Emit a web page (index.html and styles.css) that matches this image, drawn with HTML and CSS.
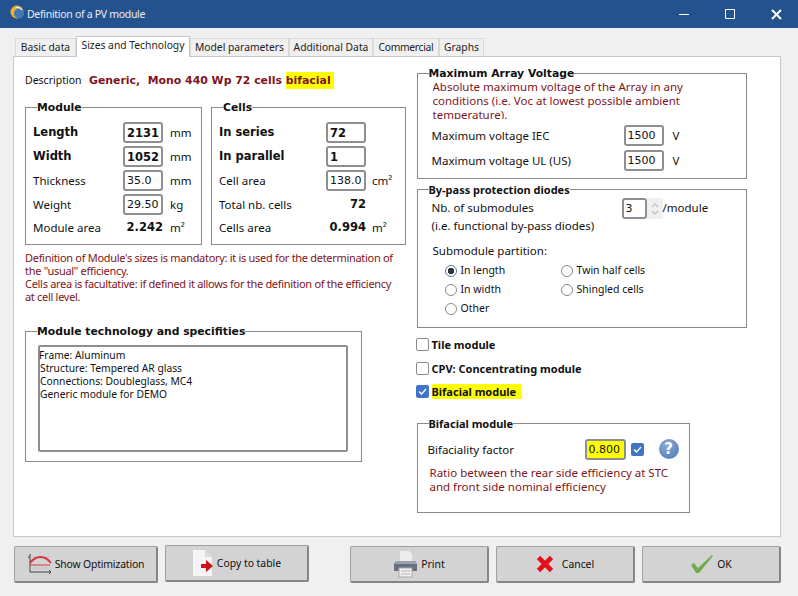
FILE: index.html
```html
<!DOCTYPE html>
<html lang="en">
<head>
  <meta charset="UTF-8" />
  <title>Definition of a PV module</title>
  <link rel="stylesheet" href="styles.css">
</head>
<body>
  <div class="titlebar">
    <svg class="app-icon" width="14" height="14" viewBox="0 0 14 14">
      <circle cx="7" cy="7" r="6.500" fill="#f0b02c" />
      <circle cx="9" cy="8.500" r="5" fill="#3f78b8" />
      <path d="M6 2.500a6 6 0 0 1 6 2.500" fill="none" stroke="#e8eef6" stroke-width="1.200" />
    </svg>
    <span class="title">Definition of a PV module</span>
    <svg class="win-btn min" width="10" height="10" viewBox="0 0 10 10"><path d="M0 5.500h10" stroke="#fff" /></svg>
    <svg class="win-btn max" width="10" height="10" viewBox="0 0 10 10"><path d="M.5.5h9v9h-9z" fill="none" stroke="#fff" /></svg>
    <svg class="win-btn close" width="11" height="11" viewBox="0 0 11 11"><path d="M1 1l9 9M10 1l-9 9" stroke="#fff" stroke-width="2" /></svg>
  </div>

  <div class="tabs">
    <span class="tab tab-basic">Basic data</span>
    <span class="tab tab-sizes active">Sizes and Technology</span>
    <span class="tab tab-model">Model parameters</span>
    <span class="tab tab-extra">Additional Data</span>
    <span class="tab tab-comm">Commercial</span>
    <span class="tab tab-graphs">Graphs</span>
  </div>

  <div class="panel">
    <div class="col-left">
      <div class="desc">
        <span class="desc-label">Description</span>
        <span class="desc-value">Generic,&nbsp; Mono 440 Wp 72 cells <mark class="desc-mark">bifacial&nbsp;</mark></span>
      </div>

      <div class="size-boxes">
        <fieldset class="group module-box">
          <legend>Module</legend>
          <div class="form-grid module-grid">
            <b>Length</b><input class="field strong" value="2131" readonly /><span>mm</span>
            <b>Width</b><input class="field strong" value="1052" readonly /><span>mm</span>
            <span>Thickness</span><input class="field" value="35.0" readonly /><span>mm</span>
            <span>Weight</span><input class="field" value="29.50" readonly /><span>kg</span>
            <span>Module area</span><b class="calc">2.242</b><span>m²</span>
          </div>
        </fieldset>
        <fieldset class="group cells-box">
          <legend>Cells</legend>
          <div class="form-grid cells-grid">
            <b>In series</b><input class="field strong" value="72" readonly /><span></span>
            <b>In parallel</b><input class="field strong" value="1" readonly /><span></span>
            <span>Cell area</span><input class="field" value="138.0" readonly /><span>cm²</span>
            <span>Total nb. cells</span><b class="calc">72</b><span></span>
            <span>Cells area</span><b class="calc">0.994</b><span>m²</span>
          </div>
        </fieldset>
      </div>

      <p class="note size-note">Definition of Module's sizes is mandatory: it is used for the determination of the "usual" efficiency.<br />Cells area is facultative: if defined it allows for the definition of the efficiency at cell level.</p>

      <fieldset class="group tech-box">
        <legend>Module technology and specifities</legend>
        <div class="memo">Frame: Aluminum<br />Structure: Tempered AR glass<br />Connections: Doubleglass, MC4<br />Generic module for DEMO</div>
      </fieldset>
    </div>

    <div class="col-right">
      <fieldset class="group voltage-box">
        <legend>Maximum Array Voltage</legend>
        <p class="note voltage-note">Absolute maximum voltage of the Array in any conditions (i.e. Voc at lowest possible ambient temperature).</p>
        <div class="volt-row"><span>Maximum voltage IEC</span><input class="field" value="1500" readonly /><span>V</span></div>
        <div class="volt-row"><span>Maximum voltage UL (US)</span><input class="field" value="1500" readonly /><span>V</span></div>
      </fieldset>

      <fieldset class="group diode-box">
        <legend class="thin">By-pass protection diodes</legend>
        <div class="sub-row">
          <span class="sub-label">Nb. of submodules<br />(i.e. functional by-pass diodes)</span>
          <input class="field sub-field" value="3" readonly />
          <span class="spin">
            <svg width="10" height="6" viewBox="0 0 10 6"><path d="M2 5l3-3 3 3" fill="none" stroke="#c4c4c4" stroke-width="1.400" /></svg>
            <svg width="10" height="6" viewBox="0 0 10 6"><path d="M2 1l3 3 3-3" fill="none" stroke="#c4c4c4" stroke-width="1.400" /></svg>
          </span>
          <span class="sub-unit">/module</span>
        </div>
        <div class="part-title">Submodule partition:</div>
        <div class="radios">
          <label class="radio"><i class="dot on"></i>In length</label>
          <label class="radio"><i class="dot"></i>Twin half cells</label>
          <label class="radio"><i class="dot"></i>In width</label>
          <label class="radio"><i class="dot"></i>Shingled cells</label>
          <label class="radio"><i class="dot"></i>Other</label>
        </div>
      </fieldset>

      <div class="checks">
        <label class="check"><i class="box"></i><b>Tile module</b></label>
        <label class="check"><i class="box"></i><b>CPV: Concentrating module</b></label>
        <label class="check">
          <i class="box on"><svg width="13" height="13" viewBox="0 0 13 13"><path d="M3 6.500l2.500 2.500L10 4" fill="none" stroke="#fff" stroke-width="1.300" /></svg></i>
          <b class="hl">Bifacial module</b>
        </label>
      </div>

      <fieldset class="group bifacial-box">
        <legend class="thin">Bifacial module</legend>
        <div class="bif-row">
          <span class="bif-label">Bifaciality factor</span>
          <input class="field bif-field" value="0.800" readonly />
          <i class="box on small"><svg width="13" height="13" viewBox="0 0 13 13"><path d="M3 6.500l2.500 2.500L10 4" fill="none" stroke="#fff" stroke-width="1.300" /></svg></i>
          <span class="help">?</span>
        </div>
        <p class="note bif-note">Ratio between the rear side efficiency at STC and front side nominal efficiency</p>
      </fieldset>
    </div>
  </div>

  <div class="actions">
    <button class="btn btn-opt">
      <svg width="25" height="20" viewBox="0 0 25 20">
        <path d="M3 0v18h21" fill="none" stroke="#444" />
        <path d="M1 3h2M22 16l2 2-2 2" fill="none" stroke="#444" />
        <path d="M3 3h20M3 14h20" stroke="#c0c0c0" />
        <path d="M3 9C9 1 18 1 24 9" fill="none" stroke="#d8343c" stroke-width="1.800" />
        <path d="M3 11h20" stroke="#d8343c" />
      </svg>
      Show Optimization
    </button>
    <button class="btn btn-copy">
      <svg width="22" height="28" viewBox="0 0 22 28">
        <path d="M1 1h12l7 7v19H1z" fill="#f4f4f4" />
        <path d="M13 1l7 7h-7z" fill="#dcdcdc" />
        <path d="M9 15h5v-4l7 6-7 6v-4H9z" fill="#d0101a" />
      </svg>
      Copy to table
    </button>
    <button class="btn btn-print">
      <svg width="25" height="28" viewBox="0 0 25 28">
        <path d="M7 1h9l3 3v8H7z" fill="#ededed" />
        <path d="M3 11h19l2 3v7H1v-7z" fill="#66717f" />
        <path d="M3 11h19l2 3H1z" fill="#99a2ad" />
        <rect x="6" y="18" width="13" height="9" fill="#f0f0f0" stroke="#a9a9a9" />
        <path d="M8 21h9M8 24h9" stroke="#b5b5b5" />
      </svg>
      Print
    </button>
    <button class="btn btn-cancel">
      <svg width="18" height="18" viewBox="0 0 18 18"><path d="M2.500 2.500l13 13M15.500 2.500l-13 13" stroke="#e0101c" stroke-width="4.600" /></svg>
      Cancel
    </button>
    <button class="btn btn-ok">
      <svg width="24" height="20" viewBox="0 0 24 20"><path d="M1 11l3-2 4 5L22 1l1 1L9 19H6z" fill="#74ab4a" /></svg>
      OK
    </button>
  </div>
</body>
</html>
```
FILE: styles.css
```css
* { box-sizing: border-box; }
html, body { height: 100%; }
body {
  margin: 0;
  width: 798px;
  height: 596px;
  overflow: hidden;
  background-color: #f0f0f0;
  color: #111;
  font-family: "Noto Sans", "DejaVu Sans", sans-serif;
  font-size: 11.500px;
  line-height: 13px;
}
b { font-family: "DejaVu Sans", sans-serif; font-size: 11.500px; }

.titlebar {
  height: 28px;
  background-color: #24528f;
  color: #e8eef6;
  display: flex;
  align-items: center;
  padding-left: 10px;
}
.app-icon { margin-right: 3px; margin-top: -5px; }
.title { font-size: 10.500px; letter-spacing: -0.3px; flex: 1; }
.win-btn { flex: none; }
.min { margin-right: 36px; }
.max { margin-right: 36px; }
.close { margin-right: 16px; }

.tabs {
  display: flex;
  align-items: flex-end;
  height: 28px;
  padding-left: 15px;
  font-size: 10.300px;
}
.tab {
  height: 18px;
  padding-top: 2px;
  background-color: #f0f0f0;
  border: 1px solid #d9d9d9;
  border-bottom: none;
  color: #222;
  text-align: center;
  white-space: nowrap;
}
.tab.active {
  height: 21px;
  background-color: #fff;
  position: relative;
  z-index: 1;
  margin-bottom: -1px;
  border-color: #c8c8c8;
}
.tab-basic { width: 61px; }
.tab-sizes { width: 114px; }
.tab-model { width: 99px; }
.tab-extra { width: 84px; }
.tab-comm { width: 66px; letter-spacing: -0.3px; }
.tab-graphs { width: 45px; }

.panel {
  margin-left: 13px;
  width: 768px;
  height: 481px;
  background-color: #fff;
  border: 1px solid #c8c8c8;
  display: flex;
  padding: 1px 0 0 11px;
}
.col-left { width: 392px; flex: none; }
.col-right { width: 330px; margin-left: -0.500px; padding-top: 9px; flex: none; }

.desc { display: flex; align-items: center; height: 24px; margin-top: 10px; }
.desc-label { width: 64px; font-size: 10.500px; }
.desc-value {
  font-family: "DejaVu Sans", sans-serif;
  font-weight: bold;
  font-size: 10.900px;
  color: #7f1420;
}
.desc-mark { background-color: #ffff00; color: #7f1420; padding: 2px 0; }

.group {
  margin: 0;
  padding: 0;
  border: 1px solid #8a8a8a;
  min-width: 0;
}
.group legend {
  margin-left: 11px;
  padding: 0;
  font-family: "DejaVu Sans", sans-serif;
  font-weight: bold;
  font-size: 10.800px;
  line-height: 13px;
  color: #111;
}
.group legend.thin {
  font-family: "Noto Sans", sans-serif;
  font-size: 11px;
}

.size-boxes { display: flex; gap: 9px; margin-top: 9px; }
.module-box { width: 177px; height: 144px; }
.cells-box { width: 195px; height: 144px; }
.form-grid {
  display: grid;
  grid-auto-rows: 23.750px;
  align-items: center;
  margin-top: 7px;
  padding-left: 7px;
}
.module-grid { grid-template-columns: 83px 40px auto; column-gap: 7px; }
.cells-grid { grid-template-columns: 101px 40px auto; column-gap: 6px; }
.calc { text-align: right; }

.field {
  width: 40px;
  height: 21px;
  padding: 0 2px;
  border: 2px solid #8f8f8f;
  border-radius: 3px;
  background-color: #fff;
  color: #111;
  font-family: "DejaVu Sans", sans-serif;
  font-size: 11px;
  outline: none;
}
.field.strong { font-weight: bold; font-size: 11.500px; }

.note { margin: 0; color: #7f1420; }
.size-note { margin-top: 6px; width: 374px; font-size: 11px; letter-spacing: -0.3px; }
.tech-box { width: 337px; height: 137px; margin-top: 22px; }
.memo {
  width: 310px;
  height: 107px;
  margin: 7px 0 0 12px;
  padding: 2px 0 0;
  border: 2px solid #8f8f8f;
  border-radius: 2px;
  font-size: 10.300px;
  text-indent: -1px;
}

.voltage-box { width: 330px; height: 112px; }
/* the third line is cut off by the control in the real dialog too */
.voltage-note { margin: 0 0 4px 15px; width: 300px; height: 39px; overflow: hidden; line-height: 14px; }
.volt-row { display: flex; align-items: center; height: 25px; padding-left: 14px; }
.volt-row span:first-child { width: 192px; }
.volt-row .field { margin-right: 9px; }

.diode-box { width: 330px; height: 145px; margin-top: 4px; }
.sub-row { display: flex; align-items: flex-start; padding: 2px 0 0 14px; }
.sub-label { width: 190px; line-height: 18px; margin-top: 1px; }
.sub-field { width: 25px; }
.spin { width: 16px; height: 21px; display: flex; flex-direction: column; align-items: center; justify-content: center; gap: 2px; background-color: #f0f0f0; }
.sub-unit { margin-top: 3px; }
.part-title { margin: 9px 0 0 15px; }
.radios {
  display: grid;
  grid-template-columns: 116px auto;
  grid-auto-rows: 19px;
  margin: 4px 0 0 27px;
  font-size: 10.500px;
}
.radio { display: flex; align-items: center; gap: 4px; }
.dot {
  width: 12px;
  height: 12px;
  border: 1.500px solid #8a8a8a;
  border-radius: 50%;
  background-color: #fff;
}
.dot.on {
  border-color: #4a7ab5;
  background: radial-gradient(circle, #333 0 3px, #fff 3.500px);
}

.checks { margin: 10px 0 0 -1px; display: flex; flex-direction: column; gap: 10px; height: 79px; }
.check { display: flex; align-items: center; height: 13.500px; gap: 3px; }
.check b { font-family: "Noto Sans", sans-serif; font-size: 11px; }
.box {
  width: 13px;
  height: 13px;
  flex: none;
  border: 1.500px solid #8a8a8a;
  border-radius: 2px;
  background-color: #fff;
  display: inline-flex;
  align-items: center;
  justify-content: center;
}
.box.on { border: none; background-color: #3f74c8; }
.check .hl { background-color: #ffff00; padding: 1px 6px 1px 0; }

.bifacial-box { width: 273px; height: 96px; }
.bif-row { display: flex; align-items: center; height: 22px; margin-top: 8px; padding-left: 10px; }
.bif-label { width: 157px; }
.bif-field {
  width: 41px;
  background-color: #ffff00;
  margin-right: 5px;
}
.help {
  width: 20px;
  height: 20px;
  margin-left: 15px;
  border-radius: 50%;
  background: radial-gradient(circle at 40% 30%, #8eabd8, #4a74b4);
  color: #fff;
  font-family: "DejaVu Sans", sans-serif;
  font-weight: bold;
  font-size: 15px;
  line-height: 20px;
  text-align: center;
}
.bif-note { margin: 6px 0 0 12px; line-height: 14px; width: 255px; }

.actions { display: flex; margin: 8px 0 0 14px; align-items: flex-start; }
.btn {
  width: 139px;
  height: 37px;
  margin: 1px 7px 0 0;
  padding: 0;
  border: 1px solid #a0a0a0;
  border-right: 2px solid #868686;
  border-bottom: 2px solid #868686;
  border-radius: 2px;
  background-color: #d3d3d3;
  color: #111;
  font-family: "Noto Sans", "DejaVu Sans", sans-serif;
  font-size: 10.400px;
  display: flex;
  align-items: center;
  justify-content: center;
  gap: 3px;
}
.btn-opt { width: 144px; letter-spacing: -0.15px; }
.btn-copy { width: 144px; margin-top: 0; margin-right: 41px; }
.btn-cancel svg { margin-right: 5px; }
```
